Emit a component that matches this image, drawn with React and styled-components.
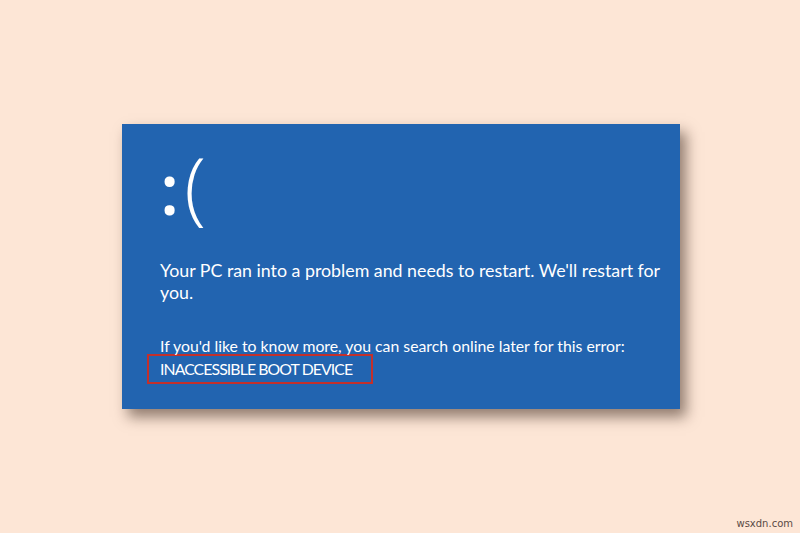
import React from "react";
import styled, { createGlobalStyle } from "styled-components";

const Global = createGlobalStyle`
  html, body { margin: 0; padding: 0; }
  body { background: #fde6d6; font-family: "Open Sans", "Liberation Sans", sans-serif; }
`;

const Page = styled.div`
  width: 800px;
  height: 533px;
  display: flex;
  align-items: center;
  justify-content: center;
  position: relative;
  overflow: hidden;
  background: #fde6d6;
`;

const Screen = styled.div`
  width: 558px;
  height: 285px;
  margin-left: 2px;
  box-sizing: border-box;
  background: #2264b0;
  box-shadow: 6px 8px 13px rgba(40, 20, 10, 0.5);
  padding: 17px 0 0 38px;
  color: #ffffff;
  display: flex;
  flex-direction: column;
`;

const Face = styled.div`
  display: flex;
  align-items: baseline;
  height: 86px;
  font-family: "Open Sans", sans-serif;
  font-weight: 400;
  line-height: 86px;
`;

const Colon = styled.span`
  font-size: 70px;
  font-weight: 600;
  margin-right: 5px;
`;

const Paren = styled.span`
  font-size: 80px;
  font-weight: 300;
`;

const Message = styled.p`
  margin: ${(p) => p.$top}px 0 0 0;
  font-family: "Lato", "Open Sans", sans-serif;
  font-size: ${(p) => p.$size}px;
  line-height: 22px;
  width: 505px;
`;

const ErrorCode = styled.span`
  display: block;
  width: fit-content;
  margin: -3px 0 0 -13px;
  padding: 2px 19px 2px 11px;
  border: 2px solid #c3302b;
  letter-spacing: -0.9px;
  line-height: 22px;
`;

const Watermark = styled.div`
  position: absolute;
  right: 7px;
  bottom: 4px;
  font-family: "DejaVu Sans", sans-serif;
  font-size: 10px;
  color: #5a4a44;
`;

export default function App() {
  return (
    <>
      <Global />
      <Page>
        <Screen>
          <Face>
            <Colon>:</Colon>
            <Paren>(</Paren>
          </Face>
          <Message $top={32} $size={17.8}>
            Your PC ran into a problem and needs to restart. We'll restart for
            you.
          </Message>
          <Message $top={32} $size={15.8}>
            If you'd like to know more, you can search online later for this error:
            <ErrorCode>INACCESSIBLE BOOT DEVICE</ErrorCode>
          </Message>
        </Screen>
        <Watermark>wsxdn.com</Watermark>
      </Page>
    </>
  );
}
